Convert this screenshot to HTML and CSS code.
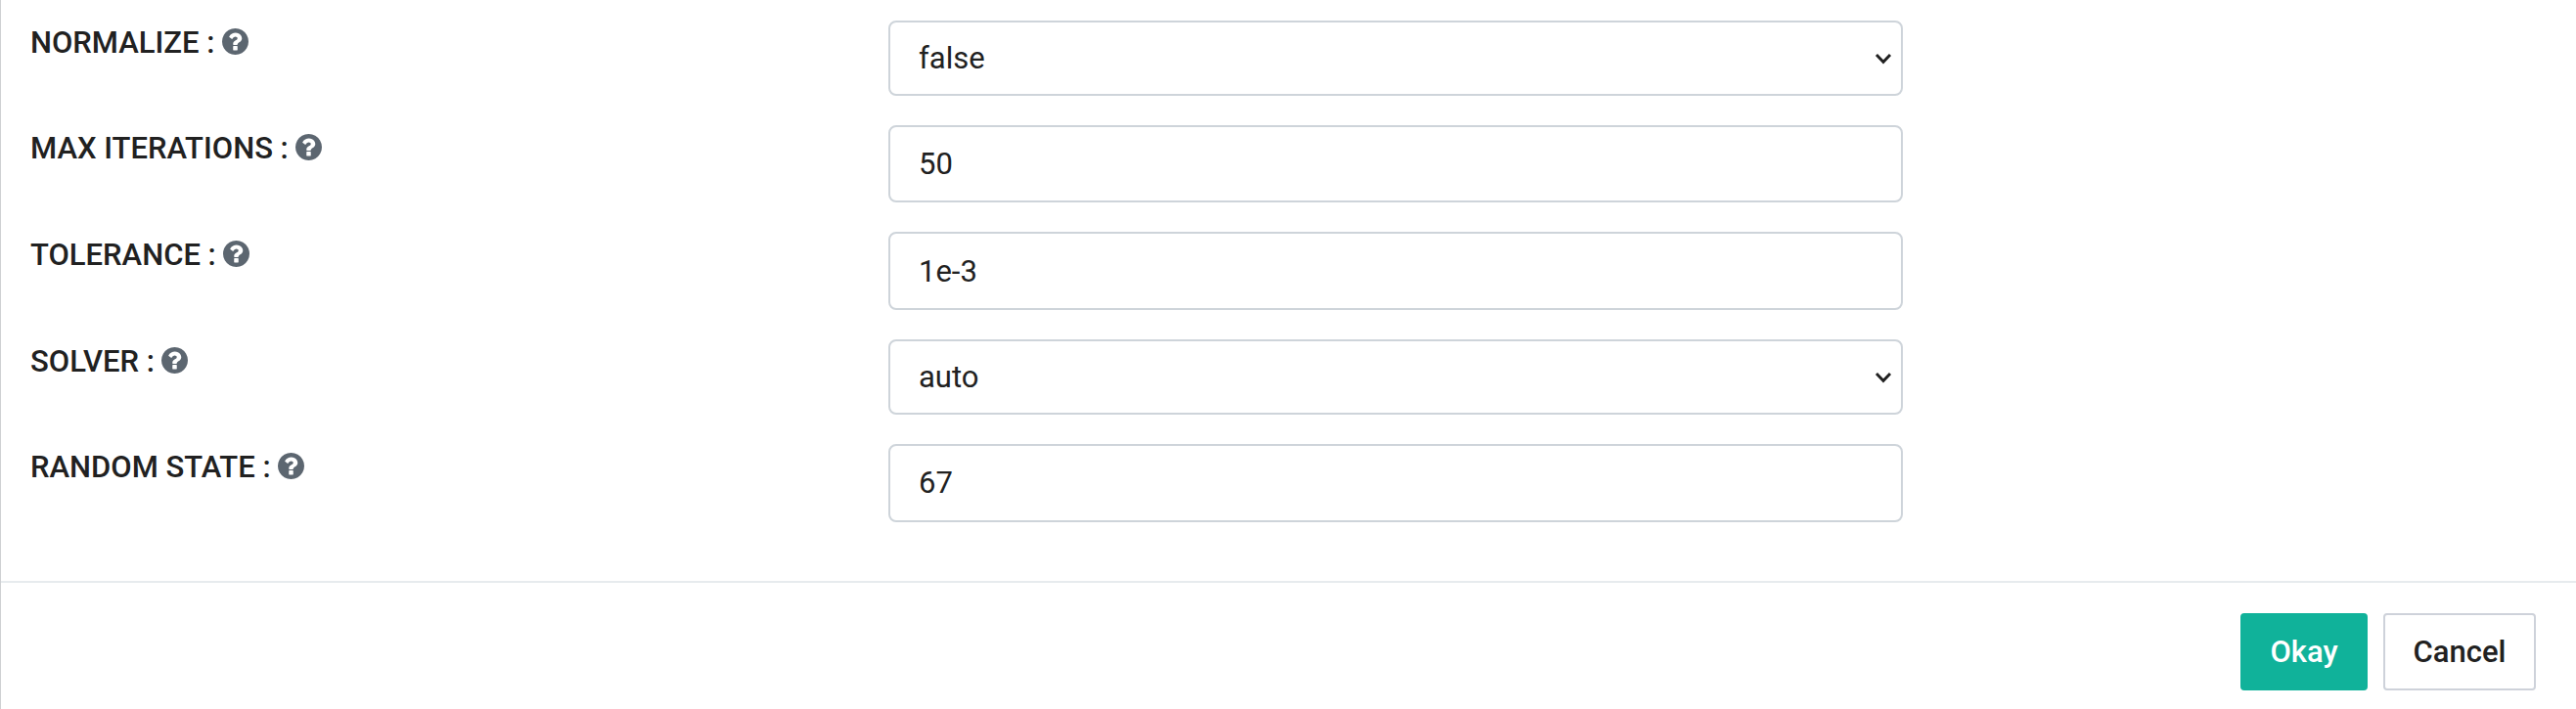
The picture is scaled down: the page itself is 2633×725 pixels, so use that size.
FILE: index.html
```
<!DOCTYPE html>
<html lang="en">
<head>
<meta charset="utf-8">
<title>Parameters</title>
<link rel="stylesheet" href="styles.css">
</head>
<body>
<svg class="sprite" width="0" height="0" aria-hidden="true">
  <symbol id="help" viewBox="128 128 1536 1536"><path d="M1024 1376v-192q0-14-9-23t-23-9H800q-14 0-23 9t-9 23v192q0 14 9 23t23 9h192q14 0 23-9t9-23zm256-672q0-88-55.500-163T1086 425t-170-41q-243 0-371 213-15 24 8 42l132 100q7 6 19 6 16 0 25-12 53-68 86-92 34-24 86-24 48 0 85.500 26t37.500 59q0 38-20 61t-68 45q-63 28-115.500 86.500T768 1020v36q0 14 9 23t23 9h192q14 0 23-9t9-23q0-19 21.500-49.500T1100 957q32-18 49-28.500t46-35 44.500-48 28-60.500 12.500-81zm384 192q0 209-103 385.500T1281.500 1561 896 1664t-385.500-103T231 1281.500 128 896t103-385.500T510.500 231 896 128t385.500 103T1561 510.500 1664 896z"/></symbol>
  <symbol id="chevron" viewBox="0 0 18 12"><path d="M2 2l7 7.300L16 2" fill="none" stroke="currentColor" stroke-width="2.900"/></symbol>
</svg>
<main class="dialog">
  <form class="fields">
    <div class="row">
      <label class="label">NORMALIZE : <svg class="help"><use href="#help"/></svg></label>
      <div class="control select">false<svg class="chevron"><use href="#chevron"/></svg></div>
    </div>
    <div class="row">
      <label class="label text-label">MAX ITERATIONS : <svg class="help"><use href="#help"/></svg></label>
      <div class="control short">50</div>
    </div>
    <div class="row">
      <label class="label text-label">TOLERANCE : <svg class="help"><use href="#help"/></svg></label>
      <div class="control tall">1e-3</div>
    </div>
    <div class="row">
      <label class="label">SOLVER : <svg class="help"><use href="#help"/></svg></label>
      <div class="control select">auto<svg class="chevron"><use href="#chevron"/></svg></div>
    </div>
    <div class="row">
      <label class="label text-label">RANDOM STATE : <svg class="help"><use href="#help"/></svg></label>
      <div class="control">67</div>
    </div>
  </form>
  <footer class="footer">
    <button class="btn primary" type="button">Okay</button>
    <button class="btn" type="button">Cancel</button>
  </footer>
</main>
</body>
</html>
```
FILE: styles.css
```
* { box-sizing: border-box; }
body {
  margin: 0;
  background: #fff;
  color: #212121;
  font: 400 31px/46px Roboto, sans-serif;
}
.sprite { display: block; }
.dialog {
  height: 725px;
  border-left: 1px solid #ced0d3;
  display: flex;
  flex-direction: column;
}
.fields {
  height: 594px;
  padding: 21px 0 0 30px;
  display: flex;
  flex-direction: column;
  gap: 30px;
}
.row {
  display: grid;
  grid-template-columns: 877px 1037px;
  align-items: start;
}
.label { font-weight: 500; white-space: nowrap; }
.text-label { padding-top: 1px; }
.help {
  width: 27px;
  height: 27px;
  margin-left: -0.5px;
  fill: #5c6670;
  vertical-align: -2px;
}
.control {
  height: 80px;
  border: 2px solid #ced4da;
  border-radius: 8px;
  padding: 0 9px 0 29px;
  display: flex;
  align-items: center;
  justify-content: space-between;
}
.short { height: 79px; }
.tall { padding-top: 2px; }
.select { height: 77px; }
.chevron { width: 18px; height: 12px; margin-top: 1px; }
.footer {
  flex: 1;
  border-top: 2px solid #e7ebee;
  padding: 31px 41px 0 0;
  display: flex;
  justify-content: flex-end;
  align-items: flex-start;
  gap: 16px;
}
.btn {
  height: 79px;
  width: 156px;
  padding: 0;
  border: 2px solid #ced2da;
  border-radius: 4px;
  background: #fff;
  color: #212121;
  font: 500 31px/46px Roboto, sans-serif;
}
.primary {
  width: 130px;
  border-color: #10b29a;
  background: #10b29a;
  color: #fff;
}
```
